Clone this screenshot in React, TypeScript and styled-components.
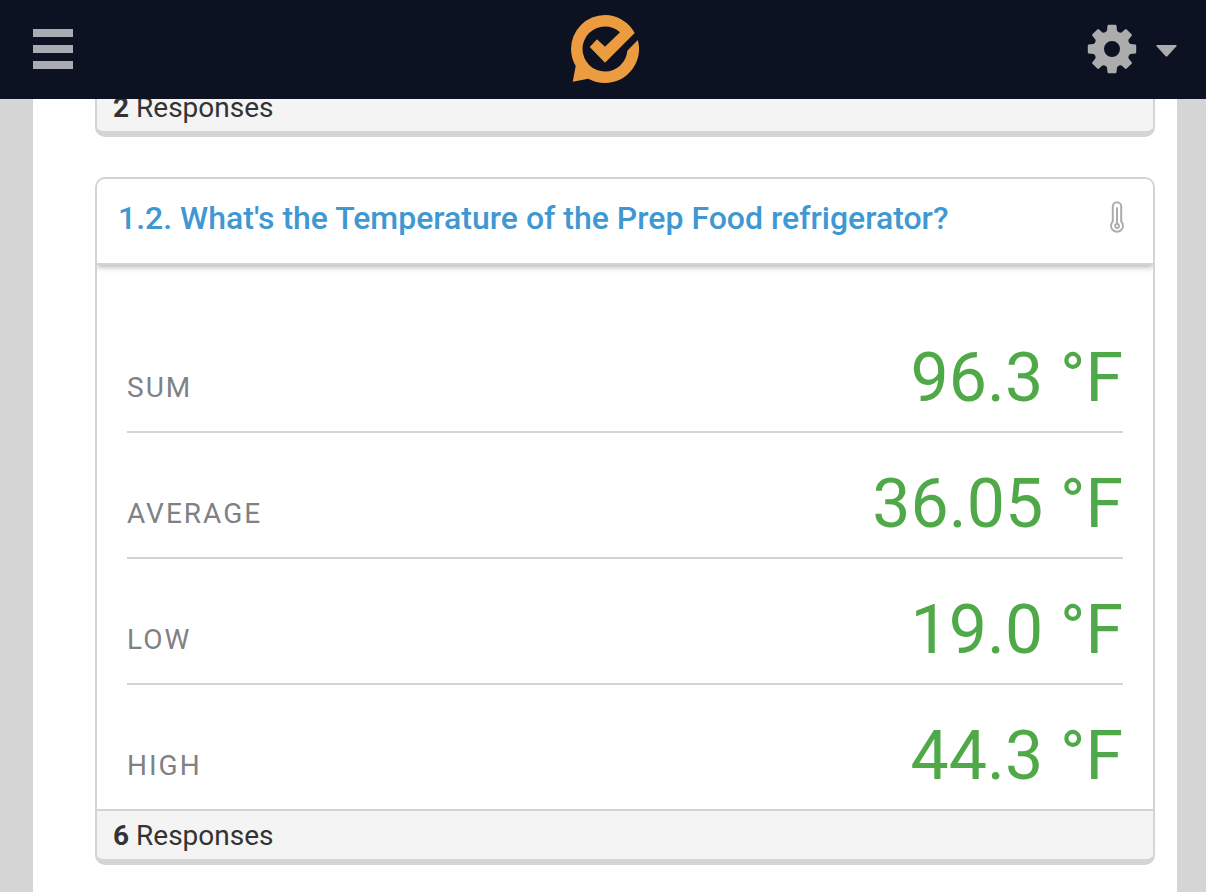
import React from "react";
import styled, { createGlobalStyle } from "styled-components";

const GlobalStyle = createGlobalStyle`
  * { box-sizing: border-box; }
  body {
    margin: 0;
    background: #d5d5d5;
    color: #333333;
    font-family: Roboto, "Liberation Sans", sans-serif;
  }
`;

const TopBar = styled.header`
  position: sticky;
  top: 0;
  z-index: 2;
  display: grid;
  grid-template-columns: 1fr auto 1fr;
  align-items: center;
  height: 99px;
  padding: 0 29px 1px 33px;
  background: #0c1222;
`;

const IconButton = styled.button<{ $end?: boolean }>`
  display: flex;
  align-items: center;
  gap: 19px;
  justify-self: ${(p) => (p.$end ? "end" : "start")};
  padding: 0;
  border: 0;
  background: none;
  cursor: pointer;
`;

const HomeLink = styled.a`
  display: block;
  height: 68px;
`;

const Page = styled.main`
  display: flex;
  flex-direction: column;
  gap: 40px;
  margin: -16px 29px 0 33px;
  padding: 0 22px 28px 62px;
  background: #ffffff;
`;

const Card = styled.section<{ $continued?: boolean }>`
  overflow: hidden;
  border: 2px solid #d4d4d4;
  border-top-width: ${(p) => (p.$continued ? "0" : "2px")};
  border-bottom-width: 6px;
  border-radius: ${(p) => (p.$continued ? "0 0 10px 10px" : "10px")};
  background: #ffffff;
`;

const CardHeader = styled.div`
  position: relative;
  display: flex;
  justify-content: space-between;
  align-items: center;
  padding: 19px 28px 25px 21px;
  border-bottom: 2px solid #d4d4d4;
  box-shadow: 0 2px 6px rgba(0, 0, 0, 0.3);
`;

const Question = styled.h2`
  margin: 0;
  font-size: 32px;
  font-weight: 500;
  line-height: 40px;
  color: #4098d3;
`;

const Stats = styled.dl`
  margin: 0;
  padding: 42px 30px 0;
`;

const Stat = styled.div`
  display: flex;
  justify-content: space-between;
  align-items: flex-end;
  padding: 31px 0 13px;
  & + & {
    border-top: 2px solid #d4d4d4;
  }
`;

const StatLabel = styled.dt`
  padding-bottom: 10px;
  font-size: 28px;
  line-height: 40px;
  letter-spacing: 2px;
  text-transform: uppercase;
  color: #808184;
`;

const StatValue = styled.dd`
  margin: 0;
  font-size: 68px;
  line-height: 80px;
  color: #50a948;
`;

const CardFooter = styled.footer<{ $divided?: boolean }>`
  padding: 5px 16px 3px;
  border-top: ${(p) => (p.$divided ? "2px solid #d4d4d4" : "0")};
  background: #f4f4f4;
  font-size: 28px;
  line-height: 40px;
`;

const Count = styled.b`
  font-weight: 700;
`;

const teeth = [0, 45, 90, 135, 180, 225, 270, 315];

const stats = [
  { label: "Sum", value: "96.3 °F" },
  { label: "Average", value: "36.05 °F" },
  { label: "Low", value: "19.0 °F" },
  { label: "High", value: "44.3 °F" },
];

const MenuIcon = () => (
  <svg width="40" height="40" viewBox="0 0 40 40" fill="#a9abb3" aria-hidden="true">
    <path d="M0 0H40V8H0ZM0 16H40V24H0ZM0 32H40V40H0Z" />
  </svg>
);

const Logo = () => (
  <svg width="68" height="68" viewBox="16 15 68 68" fill="#eb9b40" display="block" aria-hidden="true">
    <path d="M79.7 33L50 62.7L34.7 47L42 39.3L50 46.8L65 32.2A22.5 22.5 0 0 0 50 26.5A22.5 22.5 0 0 0 50 71.5A22.5 22.5 0 0 0 72.3 50.7L82.8 39.9A34 34 0 0 1 50 83A34 34 0 0 1 33.3 78.7L17.7 81.8L20.7 66A34 34 0 0 1 16 49A34 34 0 0 1 50 15A34 34 0 0 1 79.7 33Z" />
  </svg>
);

const GearIcon = () => (
  <svg width="50" height="50" viewBox="-25 -25 50 50" fill="#acacac" aria-hidden="true">
    <circle r="13" fill="none" stroke="#acacac" strokeWidth="10" />
    {teeth.map((angle) => (
      <path
        key={angle}
        transform={`rotate(${angle})`}
        d="M-6.8 -16L-5 -18.5L-4.5 -23.3Q-4.4 -24.2 -3.5 -24.2H3.5Q4.4 -24.2 4.5 -23.3L5 -18.5L6.8 -16Z"
      />
    ))}
  </svg>
);

const CaretIcon = () => (
  <svg width="21" height="16" viewBox="0 -4 21 16" fill="#acacac" aria-hidden="true">
    <path d="M1 0H20Q21.2 0 20.4 1.2L11.6 11Q10.5 12.2 9.4 11L.6 1.2Q-.2 0 1 0Z" />
  </svg>
);

const ThermometerIcon = () => (
  <svg width="16" height="34" viewBox="0 0 16 34" fill="none" stroke="#acacac" role="img" aria-label="Temperature">
    <path strokeWidth="2" d="M3.8 20.5V5.4A4.2 4.2 0 0 1 12.2 5.4V20.5A6 6 0 1 1 3.8 20.5Z" />
    <path strokeWidth="2" strokeLinecap="round" d="M8 7V22.5" />
    <circle cx="8" cy="25" r="2" strokeWidth="1.8" />
  </svg>
);

export default function App() {
  return (
    <>
      <GlobalStyle />
      <TopBar>
        <IconButton type="button" aria-label="Menu">
          <MenuIcon />
        </IconButton>
        <HomeLink href="#" aria-label="Home">
          <Logo />
        </HomeLink>
        <IconButton type="button" aria-label="Settings" $end>
          <GearIcon />
          <CaretIcon />
        </IconButton>
      </TopBar>
      <Page>
        <Card $continued>
          <CardFooter>
            <Count>2</Count> Responses
          </CardFooter>
        </Card>
        <Card>
          <CardHeader>
            <Question>1.2. What's the Temperature of the Prep Food refrigerator?</Question>
            <ThermometerIcon />
          </CardHeader>
          <Stats>
            {stats.map((stat) => (
              <Stat key={stat.label}>
                <StatLabel>{stat.label}</StatLabel>
                <StatValue>{stat.value}</StatValue>
              </Stat>
            ))}
          </Stats>
          <CardFooter $divided>
            <Count>6</Count> Responses
          </CardFooter>
        </Card>
      </Page>
    </>
  );
}
